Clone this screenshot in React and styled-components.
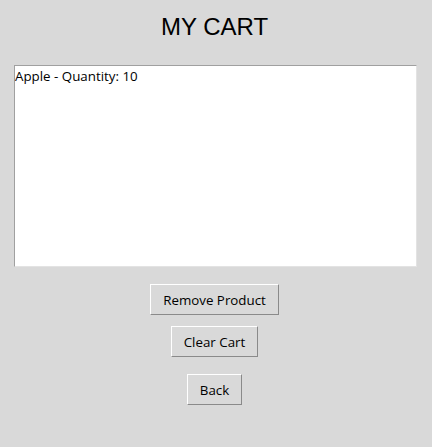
import React from 'react';
import styled, { createGlobalStyle } from 'styled-components';

const items = ['Apple - Quantity: 10'];

const App = () => {
  return (
    <Wrap>
      <GlobalStyle />
      <Title>MY CART</Title>
      <ListBox>
        {items.map((item, idx) => {
          return <Item key={idx}>{item}</Item>;
        })}
      </ListBox>
      <Buttons>
        <Btn>Remove Product</Btn>
        <Btn>Clear Cart</Btn>
        <Btn $top={17}>Back</Btn>
      </Buttons>
    </Wrap>
  );
};

export default App;

const GlobalStyle = createGlobalStyle`
  html, body {
    margin: 0;
    background: #d9d9d9;
  }
`;

const Wrap = styled.div`
  box-sizing: border-box;
  width: 432px;
  height: 447px;
  padding-right: 3px;
  display: flex;
  flex-direction: column;
  align-items: center;
  background: #d9d9d9;
`;

const Title = styled.div`
  margin-top: 12px;
  font-family: 'Liberation Sans', Arial, sans-serif;
  font-size: 24px;
  line-height: 30px;
  color: #000;
`;

const ListBox = styled.ul`
  box-sizing: border-box;
  align-self: flex-start;
  margin: 23px 0 0 14px;
  padding: 0;
  list-style: none;
  width: 403px;
  height: 202px;
  background: #fff;
  border-top: 1px solid #a0a0a0;
  border-left: 1px solid #a0a0a0;
  border-bottom: 1px solid #e3e3e3;
  border-right: 1px solid #e3e3e3;
`;

const Item = styled.li`
  font-family: 'Open Sans', 'Noto Sans', sans-serif;
  font-size: 13.33px;
  line-height: 20px;
  color: #000;
`;

const Buttons = styled.div`
  margin-top: 17px;
  display: flex;
  flex-direction: column;
  align-items: center;
  gap: 11px;
`;

const Btn = styled.button`
  box-sizing: border-box;
  margin-top: ${p => (p.$top ? p.$top - 11 : 0)}px;
  height: 31px;
  padding: 0 12px;
  background: #d9d9d9;
  font-family: 'Open Sans', 'Noto Sans', sans-serif;
  font-size: 13.33px;
  color: #000;
  border-top: 1px solid #fff;
  border-left: 1px solid #fff;
  border-bottom: 1px solid #8a8a8a;
  border-right: 1px solid #8a8a8a;
  border-radius: 0;
  cursor: pointer;
`;
